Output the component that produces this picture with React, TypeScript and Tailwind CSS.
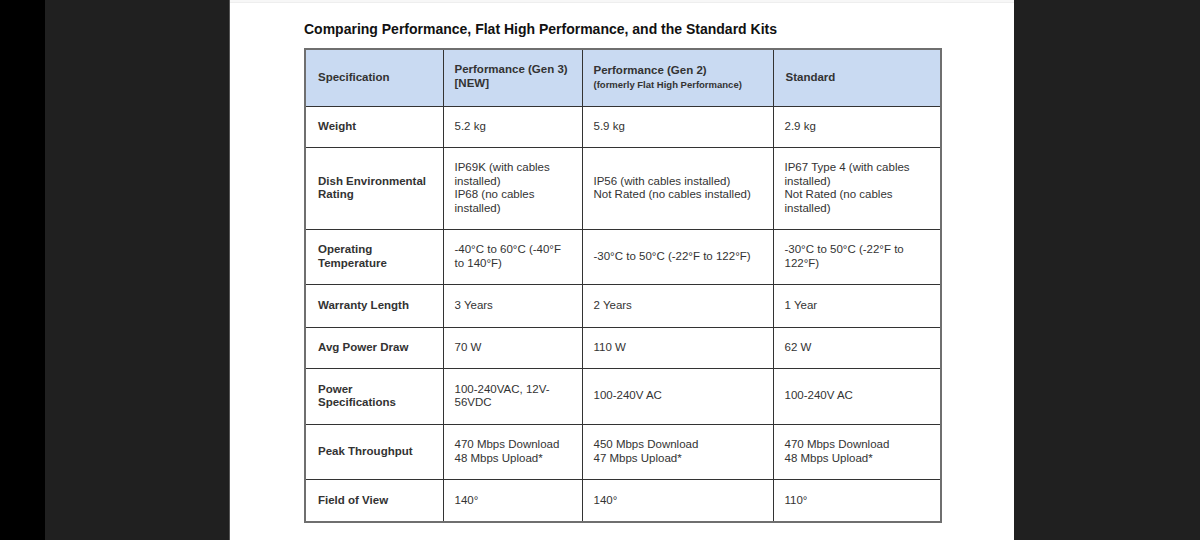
const rows: { spec: string; h: string; cells: string[][] }[] = [
  { spec: 'Weight', h: 'h-[41px]', cells: [['5.2 kg'], ['5.9 kg'], ['2.9 kg']] },
  {
    spec: 'Dish Environmental Rating',
    h: 'h-[82px]',
    cells: [
      ['IP69K (with cables installed)', 'IP68 (no cables installed)'],
      ['IP56 (with cables installed)', 'Not Rated (no cables installed)'],
      ['IP67 Type 4 (with cables installed)', 'Not Rated (no cables installed)'],
    ],
  },
  {
    spec: 'Operating Temperature',
    h: 'h-[55px]',
    cells: [['-40°C to 60°C (-40°F to 140°F)'], ['-30°C to 50°C (-22°F to 122°F)'], ['-30°C to 50°C (-22°F to 122°F)']],
  },
  { spec: 'Warranty Length', h: 'h-[43px]', cells: [['3 Years'], ['2 Years'], ['1 Year']] },
  { spec: 'Avg Power Draw', h: 'h-[41px]', cells: [['70 W'], ['110 W'], ['62 W']] },
  {
    spec: 'Power Specifications',
    h: 'h-[56px]',
    cells: [['100-240VAC, 12V-56VDC'], ['100-240V AC'], ['100-240V AC']],
  },
  {
    spec: 'Peak Throughput',
    h: 'h-[55px]',
    cells: [
      ['470 Mbps Download', '48 Mbps Upload*'],
      ['450 Mbps Download', '47 Mbps Upload*'],
      ['470 Mbps Download', '48 Mbps Upload*'],
    ],
  },
  { spec: 'Field of View', h: 'h-[43px]', cells: [['140°'], ['140°'], ['110°']] },
]

export default function App() {
  return (
    <div className="flex h-[540px] w-[1200px] overflow-hidden bg-black font-['Liberation_Sans',Arial,sans-serif]">
      <div className="w-[45px] shrink-0 bg-black" />
      <div className="w-[184px] shrink-0 bg-[#202020]" />
      <div className="w-px shrink-0 bg-[#555]" />

      {/* page */}
      <div className="flex w-[784px] shrink-0 flex-col bg-white">
        <div className="h-[3px] border-b border-[#eee] bg-[#f7f7f7]" />

        <div className="pl-[74px]">
          <h1 className="mt-[18px] text-[14px] font-bold leading-[16px] text-[#111]">
            Comparing Performance, Flat High Performance, and the Standard Kits
          </h1>

          <table className="mt-[11px] w-[636px] table-fixed border-collapse border-2 border-[#6f6f6f] text-[11.5px] leading-[13.5px] text-[#333]">
            <colgroup>
              <col className="w-[138px]" />
              <col className="w-[139px]" />
              <col className="w-[191px]" />
              <col className="w-[168px]" />
            </colgroup>
            <thead>
              <tr className="h-[57px] bg-[#c9daf2] text-[#333]">
                <th className="border border-[#333] pl-[12px] text-left align-middle font-bold">Specification</th>
                <th className="border border-[#333] pl-[11px] pb-[2px] text-left align-middle font-bold">
                  Performance (Gen 3)
                  <br />
                  [NEW]
                </th>
                <th className="border border-[#333] pl-[11px] text-left align-middle font-bold">
                  Performance (Gen 2)
                  <br />
                  <span className="text-[9.5px]">(formerly Flat High Performance)</span>
                </th>
                <th className="border border-[#333] pl-[12px] text-left align-middle font-bold">Standard</th>
              </tr>
            </thead>
            <tbody>
              {rows.map((r) => (
                <tr key={r.spec} className={r.h}>
                  <td className="border border-[#333] pl-[12px] pr-[14px] align-middle font-bold">{r.spec}</td>
                  {r.cells.map((c, i) => (
                    <td key={i} className="border border-[#333] pl-[11px] pr-[12px] align-middle">
                      {c.map((line, j) => (
                        <div key={j}>{line}</div>
                      ))}
                    </td>
                  ))}
                </tr>
              ))}
            </tbody>
          </table>
        </div>
      </div>

      <div className="flex-1 bg-[#202020]" />
    </div>
  )
}
